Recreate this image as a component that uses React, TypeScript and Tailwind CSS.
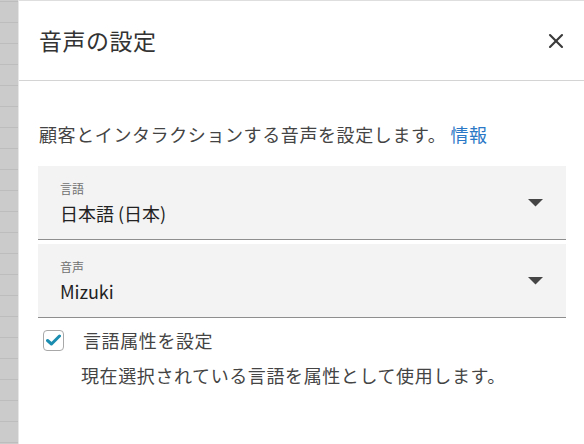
import { X } from 'lucide-react'

const stripRows = Array.from({ length: 22 }, (_, i) => i)

function SelectField({ label, value }: { label: string; value: string }) {
  return (
    <div className="h-[74px] bg-[#f3f3f3] border-b border-[#8e8e8e] flex items-center justify-between pl-[22px] pr-[23px]">
      <div className="flex flex-col">
        <span className="text-[12px] leading-[16px] text-[#707070]">{label}</span>
        <span className="text-[18px] leading-[24px] text-[#222] mt-[4px]">{value}</span>
      </div>
      <svg width="15" height="8" viewBox="0 0 15 8">
        <path d="M0 0 L15 0 L7.5 7.5 Z" fill="#454545" />
      </svg>
    </div>
  )
}

export default function App() {
  return (
    <div className="flex w-[584px] h-[444px] bg-white overflow-hidden font-['Noto_Sans_CJK_JP','Noto_Sans',sans-serif]">
      {/* background page peeking out on the left */}
      <div className="w-[19px] shrink-0 bg-[#cbcbcb] border-r border-[#e6e6e6] flex flex-col pt-px">
        {stripRows.map((i) => (
          <div key={i} className="h-[21px] shrink-0 border-t border-[#bdbdbd]" />
        ))}
      </div>

      <div className="flex-1 flex flex-col border-t border-[#dedede]">
        <div className="h-[80px] shrink-0 flex items-center justify-between pl-5 pr-[16px] border-b border-[#d4d4d4]">
          <h1 className="text-[23px] text-[#333] tracking-[0.5px]">音声の設定</h1>
          <X size={24} strokeWidth={2.1} className="text-[#3a3a3a]" />
        </div>

        <div className="flex flex-col pl-[19px] pr-[18px] pt-[41px]">
          <p className="text-[18px] leading-[24px] text-[#444] pl-px tracking-[0.6px]">
            顧客とインタラクションする音声を設定します。
            <span className="ml-[4px] text-[#2a78c6]">情報</span>
          </p>

          <div className="mt-[20px] flex flex-col gap-[4px]">
            <SelectField label="言語" value="日本語 (日本)" />
            <SelectField label="音声" value="Mizuki" />
          </div>

          <div className="mt-[10px] flex items-center pl-[5px]">
            <div className="w-[21px] h-[21px] rounded-[4px] border border-[#a8a8a8] bg-white flex items-center justify-center">
              <svg width="15" height="12" viewBox="0 0 15 12">
                <path d="M1.5 6.5 L5.5 10 L13.5 2" stroke="#1b8db0" strokeWidth="3" fill="none" strokeLinecap="round" strokeLinejoin="round" />
              </svg>
            </div>
            <span className="ml-[19px] text-[18px] leading-[24px] text-[#444] tracking-[0.6px]">言語属性を設定</span>
          </div>

          <p className="mt-[11px] pl-[43px] text-[18px] leading-[24px] text-[#444] tracking-[0.6px]">
            現在選択されている言語を属性として使用します。
          </p>
        </div>
      </div>
    </div>
  )
}
